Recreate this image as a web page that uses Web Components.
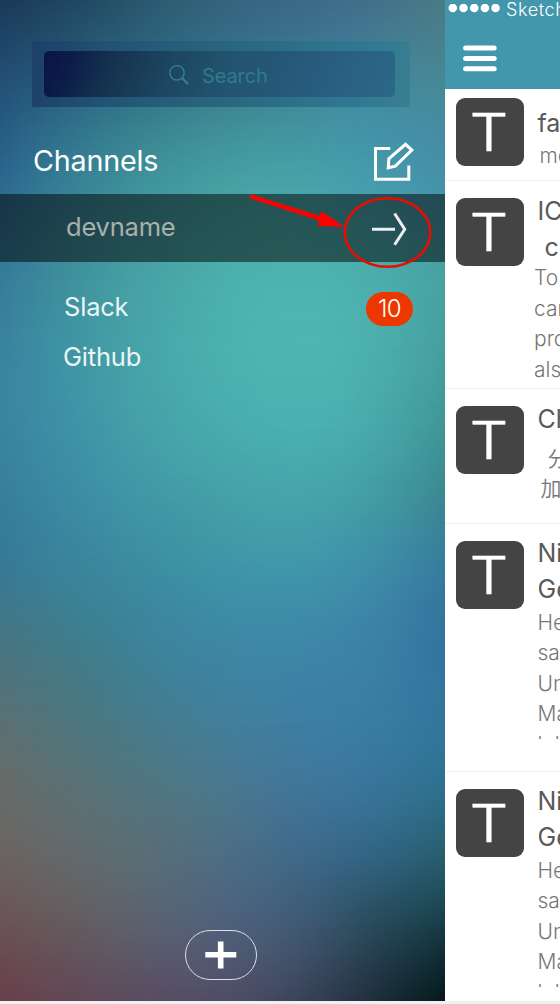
<!DOCTYPE html>
<html lang="en">
<head>
<meta charset="utf-8">
<title>Channels</title>
<style>
html,body{margin:0;height:100%;background:#f0f0f0;overflow:hidden}
</style>
</head>
<body>
<chat-app></chat-app>
<script>
const define = (name, html, setup) => customElements.define(name, class extends HTMLElement {
  constructor() {
    super();
    this.attachShadow({ mode: 'open' }).innerHTML = html;
  }
  connectedCallback() { if (setup) setup(this, this.shadowRoot); }
});

// Wallpaper: a coarse grid of colours, smoothed by a B-spline into fine bands
// that each fade into the next one below.
const bands = [
  [0,   '#1b3a56 #1f4761 #2b5a70 #35657e #3c6788 #42708c #4a7a86'],
  [50,  '#20466c #255571 #2c6480 #346f87 #3b7490 #417f9b #4a828c'],
  [100, '#24547c #2c6885 #357889 #3b8390 #3f8b98 #418fa6 #478b9a'],
  [150, '#286089 #357d92 #3c8d94 #44999d #459da4 #4496ad #458ca9'],
  [200, '#2e6d92 #3b8698 #42989e #48a5a6 #49a9aa #479faf #4595a8'],
  [262, '#347a98 #41939c #48a3a5 #4db1ad #4fb6b1 #4db0ae #48a4a5'],
  [350, '#3a84a1 #4097a4 #48a8a9 #4db3b0 #50b8b3 #4eb4b1 #469f9c'],
  [430, '#3a84a2 #3f93a8 #46a3a9 #4aadae #4db2b2 #4aadae #3f9698'],
  [500, '#367e9b #3d8ca5 #4198a6 #44a0a7 #46a5aa #439fa5 #3b868d'],
  [555, '#34799a #3a869f #3d8f9f #4098a7 #429cac #4092ab #377ea0'],
  [620, '#427785 #3b7f90 #3a86a0 #3d8ba8 #3e8ba9 #3d85a8 #34729d'],
  [680, '#50737f #44797f #3f7f96 #3e84a2 #3d82a6 #3c81a6 #33759f'],
  [745, '#626f6e #50757c #487a86 #457d98 #3e7ca3 #3b7ca2 #32769b'],
  [800, '#696b67 #5f7072 #52747d #4c7889 #42749a #38749a #2d6f8a'],
  [860, '#6c6261 #636b6c #5b6d77 #4f6e83 #3f6889 #326487 #275e6c'],
  [910, '#6c565a #66605f #5a6675 #4d6480 #405f7b #29505f #1b4550'],
  [955, '#6a4a50 #645459 #5b5a6e #535b74 #46556f #263f50 #0f2c34'],
  [1001,'#67404a #634856 #5a4c62 #504f67 #3d455c #1f303e #05191c']
];
const rgb = h => [1, 3, 5].map(i => parseInt(h.substr(i, 2), 16));
const spline = (list, t) => {
  const n = list.length - 1, i = Math.min(Math.floor(t), n - 1), f = t - i;
  const at = k => k < 0 ? list[0].map((v, c) => 2 * v - list[1][c])
    : k > n ? list[n].map((v, c) => 2 * v - list[n - 1][c]) : list[k];
  const w = [(1 - f) ** 3, 3 * f ** 3 - 6 * f * f + 4, -3 * f ** 3 + 3 * f * f + 3 * f + 1, f ** 3];
  return list[0].map((_, c) => w.reduce((s, x, k) => s + x * at(i - 1 + k)[c], 0) / 6);
};
define('wall-paper', `
<style>
:host{display:grid;overflow:hidden}
.band{grid-area:1/1}
</style>`, (el, root) => {
  const rows = bands.map(([y, c]) => {
    const cols = c.split(' ').map(rgb), out = [y];
    for (let k = 0; k <= 24; k++) out.push(...spline(cols, k / 4));
    return out;
  });
  let prev = 0;
  for (let s = 0; s <= (rows.length - 1) * 3; s++) {
    const r = spline(rows, s / 3), y = r[0], stops = [];
    for (let k = 1; k < r.length; k += 3) stops.push(`rgb(${r.slice(k, k + 3).map(v => Math.round(Math.max(v, 0))).join()})`);
    const d = document.createElement('div');
    d.className = 'band';
    d.style.background = `linear-gradient(to right,${stops.join()})`;
    if (s) d.style.maskImage = `linear-gradient(to bottom,transparent ${prev}px,#000 ${y}px)`;
    prev = y;
    root.append(d);
  }
});

define('search-box', `
<style>
:host{display:block;box-sizing:border-box;height:66px;padding:10px 15px 10px 12px;background:linear-gradient(100deg,#1d4068 0%,#235676 25%,#2b6880 55%,#307892 85%,#397f90 100%)}
.field{height:46px;border-radius:5px;display:flex;align-items:center;box-sizing:border-box;padding:3px 0 0 124px;
background:linear-gradient(110deg,#0a1447 0%,#0c1c48 8%,#153350 20%,#1c4560 35%,#22546f 52%,#265878 68%,#2a6084 84%,#2b6887 100%);
font:400 20px Inter,"Liberation Sans",sans-serif;color:#327a8c;letter-spacing:-.1px}
svg{margin:-2px 12px 0 0;flex:none}
</style>
<div class="field"><svg width="22" height="22" viewBox="0 0 22 22" fill="none" stroke="#347f90"><circle cx="9" cy="8.8" r="7.2" stroke-width="1.4"/><path d="M14 14l6 6" stroke-width="2.2"/></svg><span>Search</span></div>`);

define('channel-row', `
<style>
:host{display:flex;align-items:center;box-sizing:border-box;color:#eaf5f5;font:400 25.5px/50px Inter,"Liberation Sans",sans-serif;letter-spacing:-.2px}
.name{flex:1}
</style>
<span class="name"><slot></slot></span><slot name="end"></slot>`);

define('count-badge', `
<style>
:host{display:block;width:47px;height:34px;border-radius:17px;background:#ed3700;color:#fff;text-align:center;font:300 24px/33px Inter,"Liberation Sans",sans-serif;letter-spacing:-.6px}
</style><slot></slot>`);

define('add-button', `
<style>
:host{display:grid;place-items:center;box-sizing:border-box;width:72px;height:50px;border:1.4px solid #dde0e6;border-radius:25px}
svg{display:block}
</style><svg width="32" height="28" viewBox="0 0 32 28"><path d="M.3 13.8h31M15.7.6v26.8" stroke="#fff" stroke-width="5.6"/></svg>`);

define('side-menu', `
<style>
:host{display:grid;width:445px;height:1001px;overflow:hidden}
wall-paper,.content{grid-area:1/1;min-width:0}
.content{position:relative;display:flex;flex-direction:column}
search-box{margin:41px 35px 0 32px}
.head{height:87px;padding:20px 31px 0 33px;font-size:28.7px;color:#fff}
.head svg{margin-top:3px}
.on{height:68px;padding:0 37px 2px 66px;background:rgba(0,0,0,.5);color:#a9b0ae}
.on svg{margin-top:3px}
.slack{margin-top:20px;padding:0 32px 0 64px}
.slack count-badge{margin-top:3px}
.git{padding-left:63px}
svg{display:block}
add-button{margin:auto auto 21px 185px}
.mark{position:absolute;left:240px;top:185px}
</style>
<wall-paper></wall-paper>
<div class="content">
<search-box></search-box>
<channel-row class="head"><span>Channels</span><svg slot="end" width="42" height="40" viewBox="0 0 42 40" fill="none" stroke="#fff" stroke-width="3"><path d="M18.7 6.5H4v30.8h33.3V23.5M16.8 25.8l.5-9L34 2.3l6.3 5.8-16.5 16-7 1.7z" transform="translate(-.5 0)"/></svg></channel-row>
<channel-row class="on">devname<svg slot="end" width="36" height="34" viewBox="0 0 36 34" fill="none" stroke="#eee" stroke-width="3"><path d="M0 17.3h23M22.6 1.5l10.1 15.8-10.1 15.4"/></svg></channel-row>
<channel-row class="slack">Slack<count-badge slot="end">10</count-badge></channel-row>
<channel-row class="git">Github</channel-row>
<add-button></add-button>
<svg class="mark" width="200" height="90" viewBox="240 185 200 90"><ellipse cx="387.5" cy="232.5" rx="42.8" ry="34.3" fill="none" stroke="#ed0b00" stroke-width="2.5"/><path d="M251 194.2L319.5 215.8L322 211.5L344.5 227L317.5 225.8L318.5 220.3L249.5 198.2z" fill="#f00"/></svg>
</div>`);

define('letter-tile', `
<style>
:host{display:block;flex:none;width:68px;height:68px;border-radius:9px;background:#444;color:#fff;text-align:center;font:300 52px/69px Inter,"Liberation Sans",sans-serif}
span{display:block;transform:scaleX(1.16);margin-left:-2px;-webkit-text-stroke:.7px #fff}
</style><span><slot></slot></span>`);

define('feed-item', `
<style>
:host{display:flex;align-items:flex-start;box-sizing:border-box;border-bottom:1px solid #efefef;padding-left:11px;font-family:Inter,"Noto Sans CJK SC",sans-serif;white-space:nowrap}
.text{margin-left:13.5px;padding-top:var(--t,10.5px)}
letter-tile{margin-top:var(--tile,17px)}
::slotted(b){display:block;font-size:25px;line-height:36px;font-weight:400;color:#5a5a5a}
::slotted(p){margin:var(--gap,1px) 0 0 var(--in,0);font-size:21px;line-height:30.5px;font-weight:300;color:#777;max-height:131.5px;overflow:hidden}
</style>
<letter-tile>T</letter-tile><div class="text"><slot></slot></div>`);

define('nav-header', `
<style>
:host{display:flex;flex-direction:column;height:89px;background:#4297ac;color:#fff;font:300 18px/18px Inter,sans-serif}
.status{display:flex;align-items:center;height:18px;padding-left:3px;letter-spacing:.6px;white-space:nowrap}
svg{display:block;flex:none}
.status svg{margin-right:6px}
.status span{margin-top:1px}
.menu{margin:27px 0 0 18px}
</style>
<div class="status"><svg width="52" height="10" viewBox="0 0 52 10" fill="#fff"><circle cx="4.8" cy="4" r="4.3"/><circle cx="15.5" cy="4" r="4.3"/><circle cx="26.2" cy="4" r="4.3"/><circle cx="36.9" cy="4" r="4.3"/><circle cx="47.5" cy="4" r="4.3"/></svg><span>Sketch</span></div>
<svg class="menu" width="34" height="27" viewBox="0 0 34 27" stroke="#fff" stroke-width="5" stroke-linecap="round"><path d="M2.6 3h28.6M2.6 13.4h28.6M2.6 23.8h28.6"/></svg>`);

define('feed-panel', `
<style>
:host{display:block;width:115px;height:1001px;background:#fff;overflow:hidden}
.a{height:92px;--tile:9px;--t:15.5px;--gap:0px;--in:2px}
.b{height:208px;--t:11.5px;--gap:-1.5px;--in:-3.5px}
.c{height:135px;--t:11.5px;--gap:7px;--in:3px}
.d,.e{height:248px}
.e{border:0}
.in,.in2{padding-left:7px}
.c p{font-weight:350}
</style>
<nav-header></nav-header>
<feed-item class="a"><b>fa</b><p>me</p></feed-item>
<feed-item class="b"><b>IC</b><b class="in">c</b><p>To<br>can<br>pro<br>als</p></feed-item>
<feed-item class="c"><b>Ch</b><p><span class="in2">分</span><br>加</p></feed-item>
<feed-item class="d"><b>Ni</b><b>Ge</b><p>He<br>sa<br>Un<br>Ma<br>lol</p></feed-item>
<feed-item class="e"><b>Ni</b><b>Ge</b><p>He<br>sa<br>Un<br>Ma<br>lol</p></feed-item>`);

define('chat-app', `
<style>
:host{display:flex;width:560px;height:1004px;background:#f0f0f0;overflow:hidden}
</style>
<side-menu></side-menu><feed-panel></feed-panel>`);
</script>
</body>
</html>
